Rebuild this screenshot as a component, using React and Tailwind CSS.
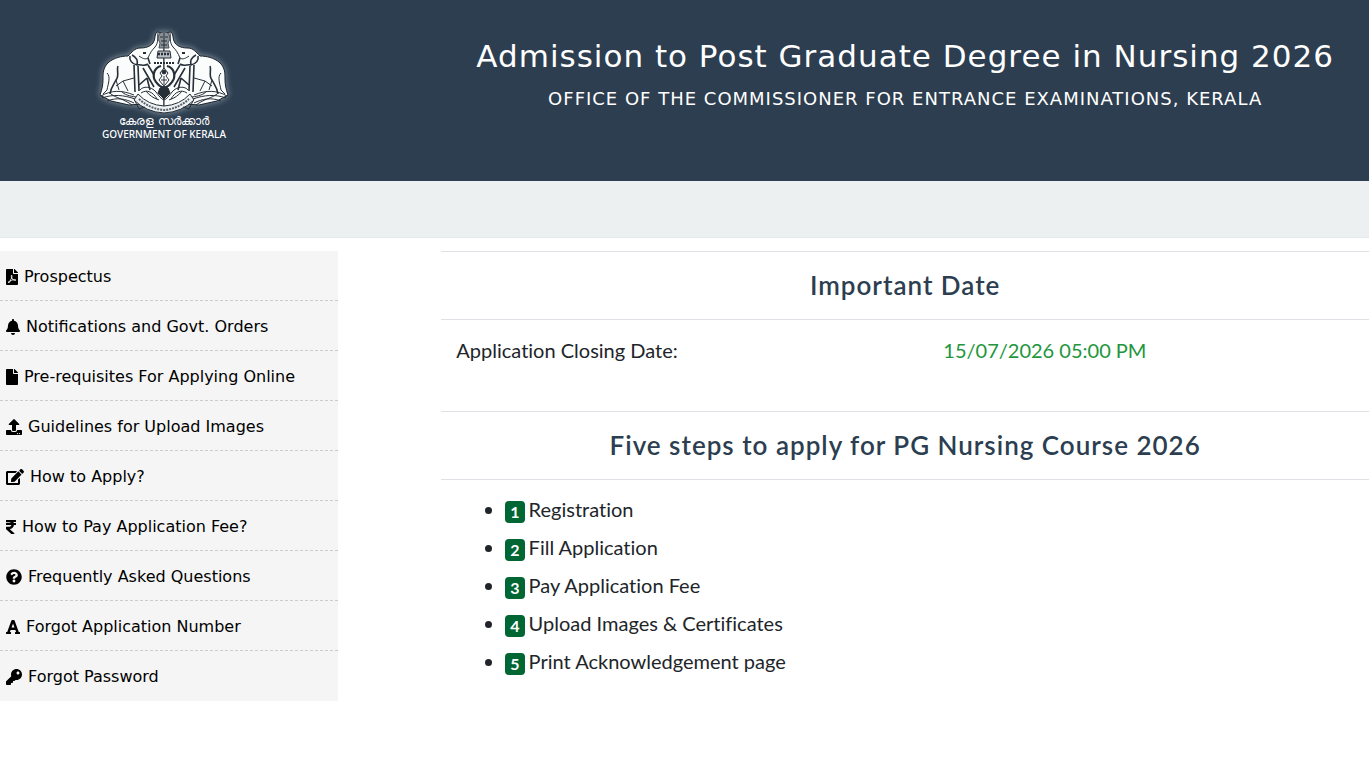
import {
  FaFilePdf,
  FaBell,
  FaFile,
  FaUpload,
  FaEdit,
  FaRupeeSign,
  FaQuestionCircle,
  FaFont,
  FaKey,
} from "react-icons/fa";

const menuItems = [
  { label: "Prospectus", icon: FaFilePdf, size: "w-3" },
  { label: "Notifications and Govt. Orders", icon: FaBell, size: "w-3.5" },
  { label: "Pre-requisites For Applying Online", icon: FaFile, size: "w-3" },
  { label: "Guidelines for Upload Images", icon: FaUpload, size: "w-4" },
  { label: "How to Apply?", icon: FaEdit, size: "w-[18px]" },
  { label: "How to Pay Application Fee?", icon: FaRupeeSign, size: "w-2.5" },
  { label: "Frequently Asked Questions", icon: FaQuestionCircle, size: "w-4" },
  { label: "Forgot Application Number", icon: FaFont, size: "w-3.5" },
  { label: "Forgot Password", icon: FaKey, size: "w-4" },
];

const steps = [
  "Registration",
  "Fill Application",
  "Pay Application Fee",
  "Upload Images & Certificates",
  "Print Acknowledgement page",
];

// left half of the emblem, the right half is the same drawing mirrored
const EmblemHalf = () => (
  <g>
    <path
      d="M65 3 L58 2 C55 4 57 9 54 13 C51 17 46 18 41 18 C36 18 33 22 29 26 C22 26 15 28 10 32 C4 37 4 43 4 49 C4 55 3 59 1 65 L12 71 L30 75 L44 74 L65 82 Z"
      fill="#fbfcfc"
      stroke="#18212a"
      strokeWidth="1"
    />
    {/* trunk, face and ear */}
    <path d="M59 3 C58 8 60 12 56 17 C53 20 51 23 49 28 C46 30 43 28 40 26" />
    <path d="M44 23 L47 23" strokeWidth="2" />
    <path d="M31 26 C30 30 33 34 38 35 C42 34 45 37 49 34 M33 25 C37 27 39 31 38 35 M49 28 L51 34" strokeWidth="1.6" />
    {/* legs */}
    <path d="M35 35 L36 62 M39 36 L40 61" strokeWidth="1.6" />
    <path d="M19 36 C17 40 21 45 17 50 C15 54 12 57 11 64" strokeWidth="1.6" />
    <path d="M8 43 C12 47 9 54 8 60 L4 64 M17 50 L20 60 M17 56 L24 51 L35 48 M24 51 L29 61" />
    <path d="M44 38 L55 57 M49 35 L55 45 M40 55 L48 48 M48 48 L51 60" strokeWidth="1.6" />
    {/* base shells */}
    <path d="M2 66 C12 60 23 60 35 65 M3 68 C14 64 25 65 36 69 M8 71 C18 67 27 69 35 73 M12 64 C17 68 25 69 33 75 M22 61 C26 65 30 66 37 67" />
    <path d="M41 60 C44 56 52 56 57 62 C60 66 62 69 65 70 M42 63 C48 59 54 62 58 69 M47 61 C50 65 54 68 60 70" />
    {/* conch frame */}
    <path d="M62 36 C54 38 53 47 57 52 C59 55 62 57 65 58" strokeWidth="2.2" />
  </g>
);

const Emblem = () => (
  <svg
    viewBox="0 0 130 84"
    className="h-[84px] w-[130px] drop-shadow-[0_0_3px_#8f9ba6]"
    fill="none"
    stroke="#262f38"
    strokeWidth="1"
    aria-hidden="true"
  >
    <EmblemHalf />
    <g transform="translate(130 0) scale(-1 1)">
      <EmblemHalf />
    </g>
    {/* lion capital */}
    <path
      d="M60 4 Q65 0 70 4 L71 9 L69 13 L70 18 H60 L61 13 L59 9 Z"
      fill="#8b9298"
      stroke="#4a535b"
    />
    <path d="M61 7 H64 M66 7 H69 M62 11 H68 M65 3 V18 M62 15 H68" />
    <path d="M59 21 H71 L72 28 H58 Z" fill="#b9bec2" />
    <path d="M59 24 H71" strokeWidth="2.5" strokeDasharray="2 1" />
    <path d="M55 33 H75" strokeWidth="2" strokeDasharray="2 1" />
    {/* conch */}
    <path d="M61 43 L65 38 L69 43 L67 46 L70 50 L66 55 H64 L60 50 L63 46 Z" fill="#fff" />
    <circle cx="65" cy="42" r="2" fill="#262f38" />
    <path d="M62 50 H68 M65 46 V54" />
    <path d="M61 58 Q65 55 69 58 L71 63 L65 69 L59 63 Z" fill="#262f38" />
    {/* ribbon */}
    <path
      d="M39 64 Q49 75 65 76 Q81 75 91 64 L95 70 Q83 82 65 83 Q47 82 35 70 Z"
      fill="#eef1f3"
    />
    <path
      d="M40 69 Q51 79 65 80 Q79 79 90 69"
      stroke="#59636c"
      strokeWidth="2"
      strokeDasharray="2 1"
    />
    <path d="M36 71 L40 79 L46 77 M94 71 L90 79 L84 77" />
  </svg>
);

const Header = () => (
  <header className="flex h-[181px] bg-[#2c3e50] text-white">
    <div className="w-[calc(33.3333%-15px)] shrink-0 pt-[30px] pl-[99px]">
      <div className="flex w-[130px] flex-col items-center whitespace-nowrap">
        <Emblem />
        <span className="text-[12px] leading-[13px]">കേരള സർക്കാർ</span>
        <span className="font-['Noto_Sans',sans-serif] text-[10px] leading-[14px] font-medium">
          GOVERNMENT OF KERALA
        </span>
      </div>
    </div>
    <div className="flex-1 pt-[37px] text-center font-['DejaVu_Sans',sans-serif]">
      <h1 className="text-[31px] leading-[38px] tracking-[1px]">
        Admission to Post Graduate Degree in Nursing 2026
      </h1>
      <h2 className="mt-3 text-[18px] leading-6 tracking-[1px]">
        OFFICE OF THE COMMISSIONER FOR ENTRANCE EXAMINATIONS, KERALA
      </h2>
    </div>
  </header>
);

const Sidebar = () => (
  <nav className="w-[338px] bg-[#f5f5f5] font-['DejaVu_Sans',sans-serif] text-[16px] text-black">
    <ul>
      {menuItems.map(({ label, icon: Icon, size }) => (
        <li key={label} className="border-b border-dashed border-[#cccccc] last:border-transparent">
          <a href="#" className="flex h-[49px] items-center gap-1.5 pt-0.5 pl-1.5">
            <Icon className={`h-4 shrink-0 ${size}`} />
            {label}
          </a>
        </li>
      ))}
    </ul>
  </nav>
);

const SectionTitle = ({ children }) => (
  <h3 className="border-y border-[#dee2e6] py-4 text-center text-[26px] leading-[35px] font-semibold tracking-[1px] text-[#2c3e50]">
    {children}
  </h3>
);

const App = () => {
  return (
    <div className="min-h-screen bg-white font-['Lato',sans-serif] text-[#212529]">
      <Header />
      <div className="h-[57px] border-b border-[#e3e8ea] bg-[#ecf0f1]" />
      <div className="flex pt-[13px]">
        <div className="w-[calc(33.3333%-15px)] shrink-0">
          <Sidebar />
        </div>
        <main className="flex-1 text-[20px] leading-[30px] [font-variant-ligatures:none]">
          <SectionTitle>Important Date</SectionTitle>
          <dl className="grid grid-cols-[21fr_19fr] pt-[15px] pb-[46px]">
            <dt className="pl-[15px]">Application Closing Date:</dt>
            <dd className="pl-[15px] text-[#22963c]">15/07/2026 05:00 PM</dd>
          </dl>
          <SectionTitle>Five steps to apply for PG Nursing Course 2026</SectionTitle>
          <ul className="list-disc pt-2.5 pl-16">
            {steps.map((step, index) => (
              <li key={step} className="h-[38px] leading-[38px]">
                <span className="mr-1 inline-block rounded bg-[#006633] px-[5px] py-[3px] align-middle text-[16px] leading-4 font-bold text-white">
                  {index + 1}
                </span>
                {step}
              </li>
            ))}
          </ul>
        </main>
      </div>
    </div>
  );
};

export default App;
